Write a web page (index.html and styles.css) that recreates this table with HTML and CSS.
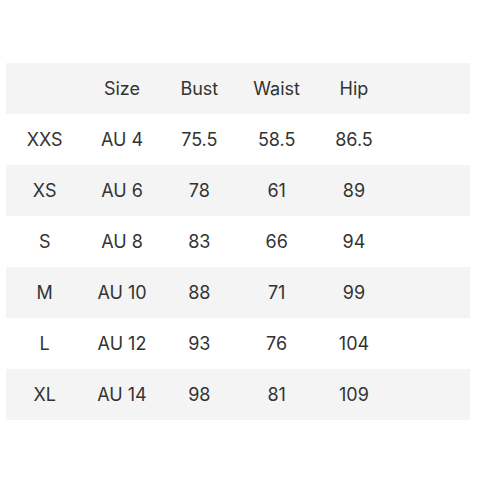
FILE: index.html
```html
<!DOCTYPE html>
<html>
<head>
<meta charset="utf-8">
<link rel="stylesheet" href="styles.css">
</head>
<body>
<table class="size-table">
  <colgroup><col><col><col><col><col><col></colgroup>
  <thead>
    <tr class="shade"><th></th><th>Size</th><th>Bust</th><th>Waist</th><th>Hip</th><th></th></tr>
  </thead>
  <tbody>
    <tr><td>XXS</td><td>AU 4</td><td>75.5</td><td>58.5</td><td>86.5</td><td></td></tr>
    <tr class="shade"><td>XS</td><td>AU 6</td><td>78</td><td>61</td><td>89</td><td></td></tr>
    <tr><td>S</td><td>AU 8</td><td>83</td><td>66</td><td>94</td><td></td></tr>
    <tr class="shade"><td>M</td><td>AU 10</td><td>88</td><td>71</td><td>99</td><td></td></tr>
    <tr><td>L</td><td>AU 12</td><td>93</td><td>76</td><td>104</td><td></td></tr>
    <tr class="shade"><td>XL</td><td>AU 14</td><td>98</td><td>81</td><td>109</td><td></td></tr>
  </tbody>
</table>
</body>
</html>
```
FILE: styles.css
```css
html, body {
  margin: 0;
  padding: 0;
  background: #ffffff;
}
body {
  padding: 63px 10px 0 6px;
  font-family: Inter, "Noto Sans", sans-serif;
  color: #333333;
}
.size-table {
  width: 464px;
  border-collapse: collapse;
  table-layout: fixed;
}
.size-table th,
.size-table td {
  height: 51px;
  padding: 0;
  text-align: center;
  vertical-align: middle;
  font-size: 18px;
  font-weight: 400;
}
.shade {
  background: #f4f4f4;
}
```
